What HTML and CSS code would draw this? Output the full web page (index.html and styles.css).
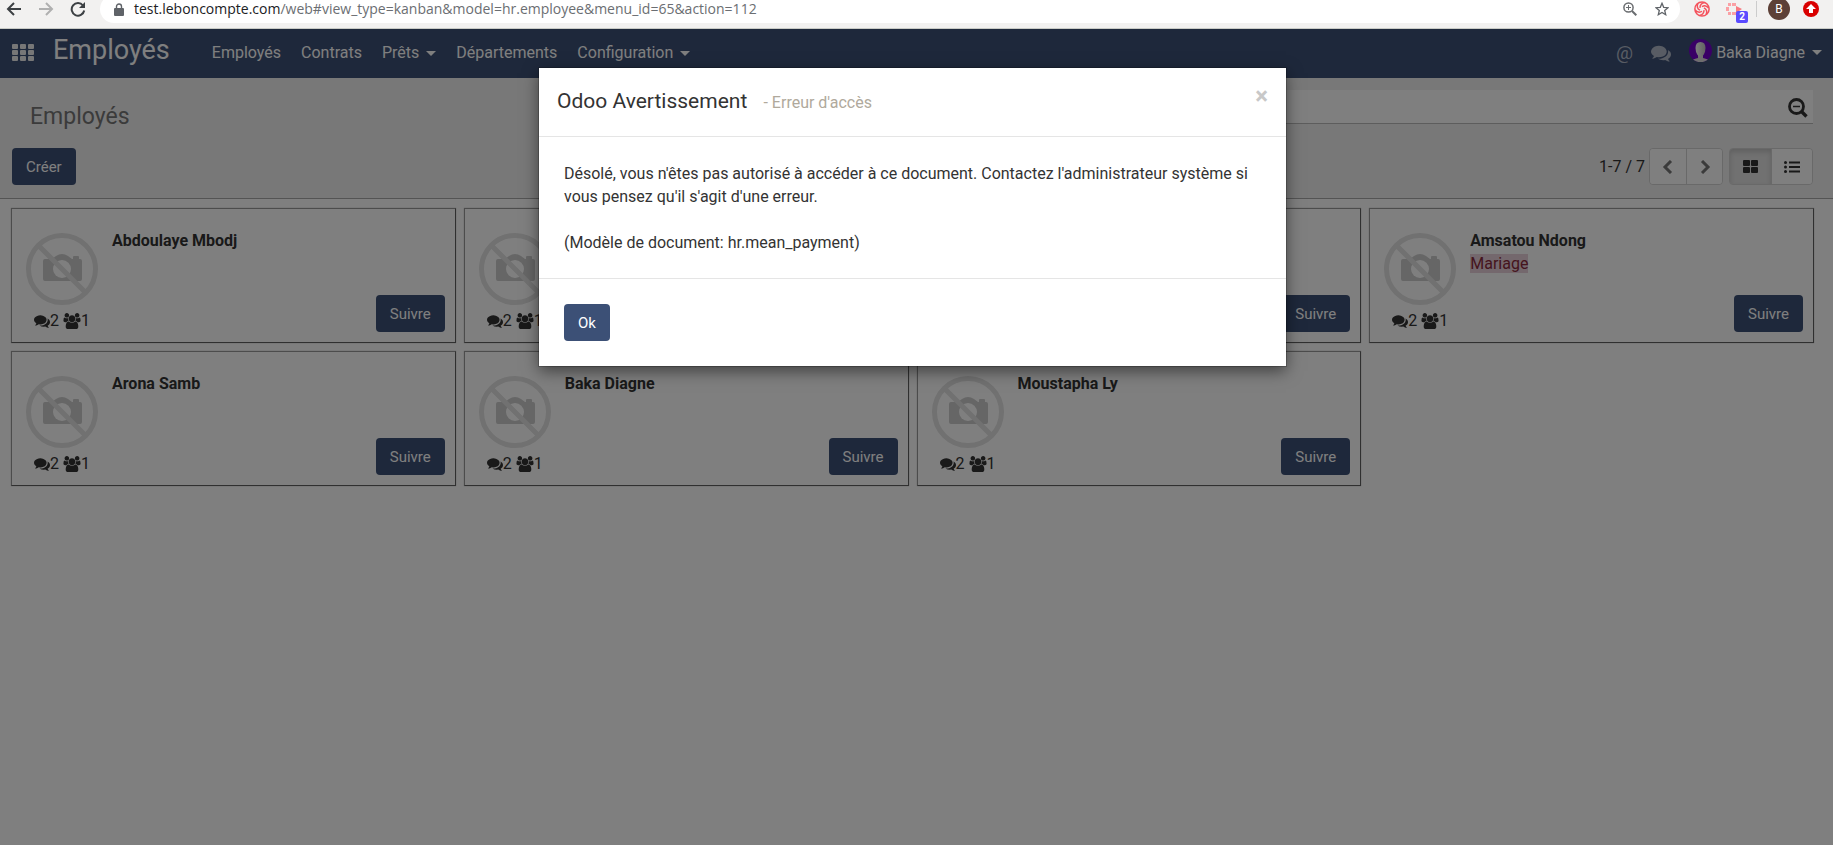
FILE: index.html
```html
<!DOCTYPE html>
<html lang="fr">
<head>
    <meta charset="UTF-8">
    <title>Employés - Odoo</title>
    <link rel="stylesheet" href="styles.css">
</head>
<body>
    <svg class="sprite" aria-hidden="true">
        <symbol id="i-comments" viewBox="0 0 1792 1792">
            <path d="M1408 768q0 139-94 257t-256.5 186.5-353.5 68.5q-86 0-176-16-124 88-278 128-36 9-86 16h-3q-11 0-20.5-8t-11.5-21q-1-3-1-6.5t.5-6.5 2-6l2.5-5 3.5-5.5 4-5 4.5-5 4-4.5q5-6 23-25t26-29.5 22.5-29 25-38.5 20.5-44q-124-72-195-177t-71-224q0-139 94-257t256.5-186.5 353.5-68.5 353.5 68.5 256.5 186.5 94 257zm384 256q0 120-71 224.5t-195 176.5q10 24 20.5 44t25 38.5 22.5 29 26 29.5 23 25q1 1 4 4.5t4.5 5 4 5 3.5 5.5l2.5 5 2 6 .5 6.5-1 6.500q-3 14-13 22t-22 7q-50-7-86-16-154-40-278-128-90 16-176 16-271 0-472-132 58 4 88 4 161 0 309-45t264-129q125-92 192-212t67-254q0-77-23-152 129 71 204 178t75 230z"/>
        </symbol>
        <symbol id="i-group" viewBox="0 0 1920 1792">
            <path d="M593 896q-162 5-265 128h-134q-82 0-138-40.5t-56-118.5q0-353 124-353 6 0 43.5 21t97.5 42.5 119 21.5q67 0 133-23-5 37-5 66 0 139 81 256zm1071 637q0 120-73 189.5t-194 69.5h-874q-121 0-194-69.5t-73-189.5q0-53 3.5-103.5t14-109 26.5-108.5 43-97.5 62-81 85.5-53.5 111.5-20q10 0 43 21.5t73 48 107 48 135 21.5 135-21.5 107-48 73-48 43-21.5q61 0 111.5 20t85.5 53.5 62 81 43 97.5 26.5 108.5 14 109 3.5 103.5zm-1024-1277q0 106-75 181t-181 75-181-75-75-181 75-181 181-75 181 75 75 181zm704 384q0 159-112.5 271.5t-271.5 112.5-271.5-112.5-112.5-271.5 112.5-271.5 271.5-112.5 271.5 112.5 112.5 271.5zm576 225q0 78-56 118.5t-138 40.5h-134q-103-123-265-128 81-117 81-256 0-29-5-66 66 23 133 23 59 0 119-21.5t97.5-42.5 43.5-21q124 0 124 353zm-128-609q0 106-75 181t-181 75-181-75-75-181 75-181 181-75 181 75 75 181z"/>
        </symbol>
        <symbol id="i-photo" viewBox="0 0 72 72">
            <path fill="#ccc" d="M19 26h7l4-3q6-4 12 0l4 3h1v-2q0-1 1-1h4q1 0 1 1v2h1q2 0 2 2v18q0 2-2 2H19q-2 0-2-2V28q0-2 2-2z"/>
            <circle cx="36" cy="36" r="9" fill="#fff"/>
            <g fill="none" stroke="#e2e2e2" stroke-width="5">
                <circle cx="36" cy="36" r="33.500"/>
                <path d="M13 13l46 46"/>
            </g>
        </symbol>
    </svg>

    <!-- barre du navigateur -->
    <header class="browser">
        <button class="chrome-btn" aria-label="Précédent">
            <svg width="16" height="16" viewBox="0 0 16 16"><path d="M15 8H2M8 2L2 8l6 6" fill="none" stroke="#3c4043" stroke-width="2"/></svg>
        </button>
        <button class="chrome-btn" aria-label="Suivant">
            <svg width="16" height="16" viewBox="0 0 16 16"><path d="M1 8h13M8 2l6 6-6 6" fill="none" stroke="#b0b0b0" stroke-width="2"/></svg>
        </button>
        <button class="chrome-btn" aria-label="Actualiser">
            <svg width="16" height="16" viewBox="0 0 16 16"><path d="M13 4.500A6.300 6.300 0 1 0 14.200 9.500" fill="none" stroke="#3c4043" stroke-width="2"/><path d="M15 1v6H9z" fill="#3c4043"/></svg>
        </button>
        <div class="url-bar">
            <svg width="10" height="13" viewBox="0 0 10 13"><path d="M1 5h8q1 0 1 1v6q0 1-1 1H1q-1 0-1-1V6q0-1 1-1z" fill="#5f6368"/><path d="M2.500 6V3.500a2.500 2.500 0 0 1 5 0V6" fill="none" stroke="#5f6368" stroke-width="1.400"/></svg>
            <span class="url"><b>test.leboncompte.com</b>/web#view_type=kanban&amp;model=hr.employee&amp;menu_id=65&amp;action=112</span>
            <svg width="14" height="14" viewBox="0 0 14 14" fill="none" stroke="#6a6d70"><circle cx="5.500" cy="5.500" r="4.600" stroke-width="1.500"/><path d="M9 9l4.300 4.300" stroke-width="2"/><path d="M3 5.500h5M5.500 3v5"/></svg>
            <svg class="star" width="14" height="14" viewBox="0 0 14 14"><path d="M7 1.300l1.700 4 4.300.4-3.300 2.800 1 4.200L7 10.500l-3.700 2.200 1-4.200L1 5.700l4.300-.4z" fill="none" stroke="#5f6368" stroke-width="1.300"/></svg>
        </div>
        <div class="extensions">
            <svg width="16" height="16" viewBox="0 0 18 18" fill="none" stroke="#f4525c" stroke-width="1.700">
                <circle cx="9" cy="9" r="8"/>
                <path id="petal" d="M9 6.500A5 5 0 0 1 16.500 8"/>
                <use href="#petal" transform="rotate(60 9 9)"/>
                <use href="#petal" transform="rotate(120 9 9)"/>
                <use href="#petal" transform="rotate(180 9 9)"/>
                <use href="#petal" transform="rotate(240 9 9)"/>
                <use href="#petal" transform="rotate(300 9 9)"/>
            </svg>
            <span class="recorder">
                <svg width="16" height="13" viewBox="0 0 16 13" fill="#fba0a4"><path d="M2 0h3v3H2zM6 0h4v3H6zM0 4h3v4H0zM2 9h3v3H2zM6 9h4v3H6z"/><path d="M10 3l6 3-6 4z" fill="#f77a80"/></svg>
                <span class="badge">2</span>
            </span>
            <span class="sep"></span>
            <span class="profile">B</span>
            <svg width="16" height="16" viewBox="0 0 16 16"><circle cx="8" cy="8" r="8" fill="#d90000"/><path d="M8 3l5 5h-3v4H6V8H3z" fill="#fff"/></svg>
        </div>
    </header>

    <div class="page">
        <nav class="navbar">
            <button class="apps" aria-label="Applications">
                <svg width="22" height="18" viewBox="0 0 22 18"><g id="th"><rect width="6" height="5" rx="1"/><rect x="8" width="6" height="5" rx="1"/><rect x="16" width="6" height="5" rx="1"/></g><use href="#th" y="6"/><use href="#th" y="12"/></svg>
            </button>
            <a class="brand" href="#">Employés</a>
            <ul class="menu">
                <li><a href="#">Employés</a></li>
                <li><a href="#">Contrats</a></li>
                <li><a href="#" class="caret">Prêts</a></li>
                <li><a href="#">Départements</a></li>
                <li><a href="#" class="caret">Configuration</a></li>
            </ul>
            <div class="systray">
                <a class="tray at" href="#">@</a>
                <a class="tray" href="#" aria-label="Discussions"><svg width="20" height="20"><use href="#i-comments"/></svg></a>
                <a class="user caret" href="#">
                    <svg width="23" height="23" viewBox="0 0 23 23">
                        <defs>
                            <clipPath id="disc"><circle cx="11.500" cy="11.500" r="11.500"/></clipPath>
                            <linearGradient id="face"><stop offset="0" stop-color="#fff"/><stop offset="1" stop-color="#c4c4c4"/></linearGradient>
                        </defs>
                        <g clip-path="url(#disc)"><path fill="#7200cc" d="M0 0h23v23H0z"/><path fill="#ddd" d="M2 23q1-3 7-4v-3h5v3q6 1 7 4z"/><path fill="url(#face)" d="M11.500 3q5 0 5 6 0 4-2 7-3 3-6 0-2-3-2-7 0-6 5-6z"/></g>
                    </svg>
                    Baka Diagne
                </a>
            </div>
        </nav>

        <section class="control-panel">
            <div class="cp-row">
                <h1>Employés</h1>
                <div class="search">
                    <input type="text" aria-label="Rechercher">
                    <svg width="20" height="20" viewBox="0 0 20 20" fill="none" stroke="#333"><circle cx="8.500" cy="8.500" r="7" stroke-width="2.800"/><path d="M5 8.500h7" stroke-width="1.500"/><path d="M13.500 13.500l5 5" stroke-width="3.400"/></svg>
                </div>
            </div>
            <div class="cp-row">
                <button class="btn">Créer</button>
                <div class="cp-right">
                    <span class="pager">1-7 / 7</span>
                    <div class="group">
                        <button aria-label="Page précédente"><svg width="12" height="14" viewBox="0 0 12 14"><path d="M9 1L3 7l6 6" fill="none" stroke="#777" stroke-width="3"/></svg></button>
                        <button aria-label="Page suivante"><svg width="12" height="14" viewBox="0 0 12 14"><path d="M3 1l6 6-6 6" fill="none" stroke="#777" stroke-width="3"/></svg></button>
                    </div>
                    <div class="group switch">
                        <button class="active" aria-label="Kanban"><svg width="15" height="13" viewBox="0 0 15 13" fill="#333"><rect width="7" height="6" rx="1"/><rect x="8" width="7" height="6" rx="1"/><rect y="7" width="7" height="6" rx="1"/><rect x="8" y="7" width="7" height="6" rx="1"/></svg></button>
                        <button aria-label="Liste"><svg width="16" height="12" viewBox="0 0 16 12" fill="#333"><circle cx="1.500" cy="1.500" r="1.500"/><circle cx="1.500" cy="6" r="1.500"/><circle cx="1.500" cy="10.500" r="1.500"/><path d="M5 .5h11v2H5zM5 5h11v2H5zM5 9.500h11v2H5z"/></svg></button>
                    </div>
                </div>
            </div>
        </section>

        <main class="kanban"></main>

        <div class="backdrop">
            <div class="modal" role="dialog" aria-labelledby="modal-title">
                <div class="modal-header">
                    <h2 id="modal-title">Odoo Avertissement <small>- Erreur d'accès</small></h2>
                    <button class="close" aria-label="Fermer">×</button>
                </div>
                <div class="modal-body">
                    <p>Désolé, vous n'êtes pas autorisé à accéder à ce document. Contactez l'administrateur système si vous pensez qu'il s'agit d'une erreur.</p>
                    <p>(Modèle de document: hr.mean_payment)</p>
                </div>
                <div class="modal-footer">
                    <button class="btn">Ok</button>
                </div>
            </div>
        </div>
    </div>

    <script src="script.js"></script>
</body>
</html>
```
FILE: styles.css
```css
* {
    box-sizing: border-box;
}

body {
    margin: 0;
    min-height: 100vh;
    display: flex;
    flex-direction: column;
    font: 16px/23px Roboto, sans-serif;
    color: #333;
    background: #fff;
}

h1, h2, p, ul {
    margin: 0;
    padding: 0;
    font-weight: 400;
}

a {
    color: inherit;
    text-decoration: none;
}

button {
    font-family: inherit;
    border: 0;
    padding: 0;
    background: none;
    cursor: pointer;
}

svg {
    display: block;
    flex: none;
}

.sprite {
    position: absolute;
    width: 0;
    height: 0;
}

/* navigateur */
.browser {
    height: 29px;
    display: flex;
    align-items: flex-start;
    overflow: hidden;
    padding-left: 6px;
    background: #f2f1f0;
    border-bottom: 1px solid #c9cbc6;
}

.chrome-btn {
    width: 16px;
    height: 18px;
    margin-right: 16px;
}

.url-bar {
    flex: 1;
    height: 28px;
    margin-top: -5px;
    padding: 0 11px 0 14px;
    border-radius: 14px;
    display: flex;
    align-items: center;
    background: #fff;
    margin-left: -2px;
}

.url {
    flex: 1;
    margin-left: 10px;
    font: 14px/18px "Open Sans", sans-serif;
    color: #6b6e72;
    white-space: nowrap;
}

.url b {
    font-weight: 400;
    color: #202124;
}

.star {
    margin-left: 18px;
}

.extensions {
    display: flex;
    align-items: center;
    height: 18px;
    padding: 0 14px;
}

.recorder {
    position: relative;
    margin-left: 16px;
    width: 22px;
}

.badge {
    position: absolute;
    left: 10px;
    top: 8px;
    width: 12px;
    height: 12px;
    border-radius: 2px;
    background: #5b4bff;
    color: #fff;
    font-size: 10px;
    font-weight: 700;
    line-height: 12px;
    text-align: center;
}

.sep {
    width: 1px;
    height: 16px;
    margin: 0 11px 0 8px;
    background: #ccc;
}

.profile {
    width: 22px;
    height: 22px;
    margin-right: 13px;
    border-radius: 50%;
    background: #5d4037;
    color: #fff;
    font-size: 12px;
    line-height: 22px;
    text-align: center;
}

/* page */
.page {
    position: relative;
    flex: 1;
}

.navbar {
    height: 49px;
    display: flex;
    align-items: center;
    padding: 0 11px 2px 12px;
    background: #3c5076;
    color: #fff;
    fill: #fff;
}

.apps {
    fill: #eee;
}

.brand {
    margin: -5px 42px 0 19px;
    font-size: 27px;
    line-height: 36px;
}

.menu {
    display: flex;
    gap: 20px;
    list-style: none;
}

.caret::after {
    content: "";
    display: inline-block;
    margin-left: 7px;
    vertical-align: 2px;
    border: 5px solid transparent;
    border-top-color: currentColor;
    border-bottom: 0;
}

.systray {
    display: flex;
    align-items: center;
    margin-left: auto;
}

.tray {
    margin-right: 18px;
    color: #b1b9c8;
    fill: #b1b9c8;
}

.at {
    font-size: 19px;
}

.user {
    display: flex;
    align-items: center;
    gap: 4px;
}

.user svg {
    margin-top: -5px;
}

.user::after {
    margin-left: 3px;
}

.control-panel {
    height: 121px;
    padding: 12px 20px 0 12px;
    background: #f0f0f0;
    border-bottom: 1px solid #a8a8a8;
}

.cp-row {
    display: flex;
    justify-content: space-between;
    align-items: flex-start;
}

.control-panel h1 {
    padding: 12px 0 0 18px;
    font-size: 23px;
    line-height: 30px;
    color: #777;
}

.search {
    width: 50%;
    height: 34px;
    margin-bottom: 24px;
    display: flex;
    align-items: center;
    padding: 3px 5px 0 0;
    background: #fff;
    border-bottom: 1px solid #bbb;
}

.search input {
    flex: 1;
    border: 0;
    background: none;
    font: inherit;
}

.btn {
    height: 37px;
    padding: 0 14px;
    border-radius: 4px;
    background: #3c5076;
    color: #fff;
    font-size: 15px;
}

.cp-right {
    display: flex;
    align-items: center;
}

.pager {
    margin-right: 4px;
}

.group {
    display: flex;
    height: 37px;
    border: 1px solid #d2d2d2;
    border-radius: 4px;
    overflow: hidden;
}

.group button {
    width: 36px;
    display: grid;
    place-items: center;
    background: #fff;
}

.group button + button {
    border-left: 1px solid #d2d2d2;
}

.switch {
    margin-left: 6px;
}

.switch button {
    width: 41px;
}

.switch .active {
    background: #e2e2e2;
    box-shadow: inset 0 3px 5px rgba(0, 0, 0, 0.15);
}

.kanban {
    display: grid;
    grid-template-columns: repeat(4, 1fr);
    gap: 8px;
    padding: 9px 19px 9px 11px;
}

.card {
    height: 135px;
    display: flex;
    padding: 24px 10px 10px 14px;
    border: 1px solid;
    border-color: #999 #606060 #606060 #999;
    box-shadow: 0 0 1px #aaa;
}

.card-text {
    flex: 1;
    margin: -4px 0 0 14px;
}

.card-text strong {
    display: block;
}

.card-text mark {
    background: #e8d0da;
    color: #8a2a3c;
    line-height: 19px;
}

.stats {
    display: flex;
    align-items: center;
    gap: 4px;
    padding: 4px 0 0 8px;
    fill: #333;
}

.stats span {
    display: flex;
    align-items: center;
}

.card .btn {
    align-self: flex-end;
}

/* fenêtre d'avertissement */
.backdrop {
    position: absolute;
    inset: 0;
    padding: 39px 8px 0 0;
    background: rgba(0, 0, 0, 0.5);
}

.modal {
    max-width: 747px;
    margin: 0 auto;
    background: #fff;
    box-shadow: 0 5px 15px rgba(0, 0, 0, 0.5), 0 0 0 1px rgba(0, 0, 0, 0.2);
}

.modal-header {
    display: flex;
    justify-content: space-between;
    align-items: flex-start;
    padding: 18px;
    border-bottom: 1px solid #e5e5e5;
}

.modal h2 {
    font-size: 21px;
    line-height: 31px;
}

.modal small {
    margin-left: 11px;
    font-size: 16px;
    color: #b0a99c;
}

.close {
    color: #c8c8c8;
    font-size: 24px;
    font-weight: 700;
    line-height: 20px;
}

.modal-body {
    padding: 25px 25px 24px;
}

.modal-body p + p {
    margin-top: 23px;
}

.modal-footer {
    padding: 25px;
    border-top: 1px solid #e5e5e5;
}
```
FILE: script.js
```js
const employees = [
    { name: 'Abdoulaye Mbodj' },
    { name: '' },
    { name: '' },
    { name: 'Amsatou Ndong', tag: 'Mariage' },
    { name: 'Arona Samb' },
    { name: 'Baka Diagne' },
    { name: 'Moustapha Ly' }
];

document.querySelector('.kanban').innerHTML = employees.map(e => `
    <article class="card">
        <div>
            <svg width="72" height="72"><use href="#i-photo"/></svg>
            <div class="stats">
                <span><svg width="16" height="16"><use href="#i-comments"/></svg>2</span>
                <span><svg width="18" height="16"><use href="#i-group"/></svg>1</span>
            </div>
        </div>
        <div class="card-text">
            <strong>${e.name}</strong>
            ${e.tag ? `<mark>${e.tag}</mark>` : ''}
        </div>
        <button class="btn">Suivre</button>
    </article>`).join('');
```
